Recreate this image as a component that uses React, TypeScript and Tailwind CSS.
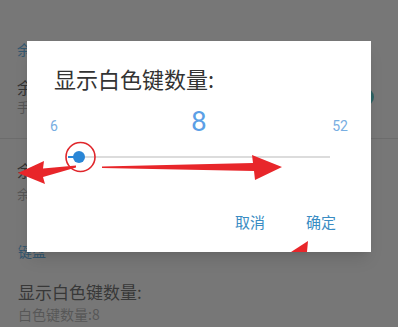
import React from "react";

const cjk = { fontFamily: '"Noto Sans CJK SC", "Noto Sans", sans-serif' };
const num = { fontFamily: 'Roboto, "Noto Sans", sans-serif' };

// Value slider inside the dialog: min 6, max 52, current 8.
function Slider({ min, max, value }: { min: number; max: number; value: number }) {
  const pct = ((value - min) / (max - min)) * 100;
  return (
    <div className="relative ml-[41px] mr-[41px] h-[24px]">
      <div className="absolute left-0 right-0 top-[11px] h-[2px] bg-[#dcdcdc]" />
      <div className="absolute left-0 top-[11px] h-[2px] bg-[#2a86d6]" style={{ width: `${pct}%` }} />
      <div
        className="absolute top-[6px] h-[12px] w-[12px] -translate-x-1/2 rounded-full bg-[#2a86d6]"
        style={{ left: `${pct}%` }}
      />
    </div>
  );
}

export default function App() {
  return (
    <div className="relative h-[327px] w-[398px] overflow-hidden bg-[#777777]" style={cjk}>
      {/* dimmed settings page behind the dialog */}
      <div className="flex flex-col pt-[39px]">
        <p className="pl-[17px] text-[14px] leading-[20px] text-[#33566e]">余音设置</p>
        <div className="mt-[18px] flex items-center justify-between pl-[17px] pr-[24px]">
          <div className="flex flex-col">
            <p className="text-[16px] leading-[21px] text-[#333]">余音开关</p>
            <p className="text-[13px] leading-[18px] text-[#555]">手指离开琴键后继续发声</p>
          </div>
          <div className="h-[18px] w-[20px] rounded-full bg-[#2d6163]" />
        </div>
        <div className="mt-[22px] h-px bg-[#6c6c6c]" />
        <p className="mt-[20px] pl-[17px] text-[16px] leading-[22px] text-[#333]">余音时长</p>
        <p className="mt-[4px] pl-[17px] text-[13px] leading-[18px] text-[#555]">余音持续时间:1000ms</p>
        <p className="mt-[38px] pl-[18px] text-[14px] leading-[20px] text-[#33566e]">键盘</p>
        <p className="mt-[19px] pl-[18px] text-[17px] leading-[24px] text-[#383838]">显示白色键数量:</p>
        <p className="pl-[18px] text-[14px] leading-[20px] text-[#575757]">白色键数量:8</p>
      </div>

      {/* dialog */}
      <div className="absolute left-[27px] top-[41px] flex h-[211px] w-[344px] flex-col bg-white shadow-lg">
        <p className="pl-[27px] pt-[22px] text-[22px] leading-[30px] text-[#333]">显示白色键数量:</p>
        <div className="mt-[13px] grid grid-cols-3 items-baseline px-[23px]" style={num}>
          <span className="text-[14px] text-[#78aee2]">6</span>
          <span className="text-center text-[28px] leading-[32px] text-[#5c9fe6]">8</span>
          <span className="text-right text-[14px] text-[#78aee2]">52</span>
        </div>
        <div className="mt-[7px]">
          <Slider min={6} max={52} value={8} />
        </div>
        <div className="mt-[43px] flex justify-end gap-[41px] pr-[35px] text-[15px] leading-[20px] text-[#3a8cc3]">
          <span>取消</span>
          <span>确定</span>
        </div>
      </div>

      {/* red annotations */}
      <svg className="pointer-events-none absolute left-0 top-0" width="398" height="327" viewBox="0 0 398 327">
        <circle cx="80.5" cy="157" r="14.5" fill="none" stroke="#e0262b" strokeWidth="1.6" />
        <polygon points="18,173 44,161 43,168.5 76,165.5 76,167.5 43,177 45,184" fill="#e8262a" />
        <polygon points="102,166.5 253,163 252,155 282,167 255,180 254,171 102,168" fill="#e8262a" />
        <polygon points="291,252 308,241 307,252" fill="#e8262a" />
      </svg>
    </div>
  );
}
